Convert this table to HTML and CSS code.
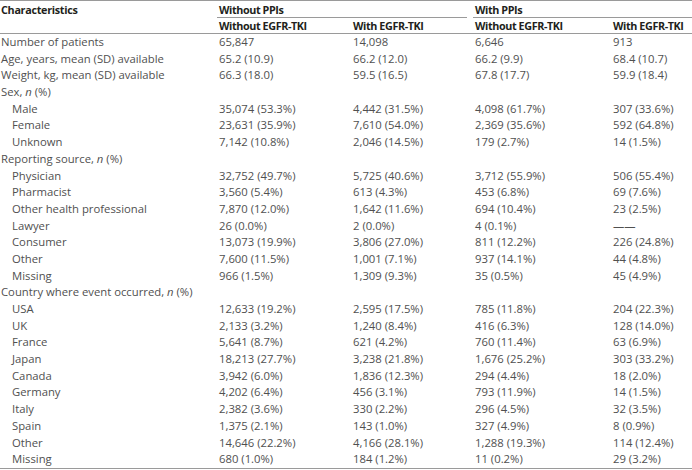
FILE: index.html
```html
<!DOCTYPE html>
<html>
<head>
<meta charset="utf-8">
<link rel="stylesheet" href="styles.css">
</head>
<body>
<table class="data">
  <colgroup>
    <col class="c1"><col class="c2"><col class="c3"><col class="c4"><col class="c5">
  </colgroup>
  <thead>
    <tr class="h1">
      <th rowspan="2" class="char">Characteristics</th>
      <th colspan="2" class="grp grp-a"><div class="grp-label">Without PPIs</div></th>
      <th colspan="2" class="grp grp-b"><div class="grp-label">With PPIs</div></th>
    </tr>
    <tr class="h2">
      <th>Without EGFR-TKI</th>
      <th>With EGFR-TKI</th>
      <th>Without EGFR-TKI</th>
      <th>With EGFR-TKI</th>
    </tr>
  </thead>
  <tbody>
    <tr><td>Number of patients</td><td>65,847</td><td>14,098</td><td>6,646</td><td>913</td></tr>
    <tr><td>Age, years, mean (SD) available</td><td>65.2 (10.9)</td><td>66.2 (12.0)</td><td>66.2 (9.9)</td><td>68.4 (10.7)</td></tr>
    <tr><td>Weight, kg, mean (SD) available</td><td>66.3 (18.0)</td><td>59.5 (16.5)</td><td>67.8 (17.7)</td><td>59.9 (18.4)</td></tr>
    <tr><td>Sex, <i>n</i> (%)</td><td></td><td></td><td></td><td></td></tr>
    <tr><td class="sub">Male</td><td>35,074 (53.3%)</td><td>4,442 (31.5%)</td><td>4,098 (61.7%)</td><td>307 (33.6%)</td></tr>
    <tr><td class="sub">Female</td><td>23,631 (35.9%)</td><td>7,610 (54.0%)</td><td>2,369 (35.6%)</td><td>592 (64.8%)</td></tr>
    <tr><td class="sub">Unknown</td><td>7,142 (10.8%)</td><td>2,046 (14.5%)</td><td>179 (2.7%)</td><td>14 (1.5%)</td></tr>
    <tr><td>Reporting source, <i>n</i> (%)</td><td></td><td></td><td></td><td></td></tr>
    <tr><td class="sub">Physician</td><td>32,752 (49.7%)</td><td>5,725 (40.6%)</td><td>3,712 (55.9%)</td><td>506 (55.4%)</td></tr>
    <tr><td class="sub">Pharmacist</td><td>3,560 (5.4%)</td><td>613 (4.3%)</td><td>453 (6.8%)</td><td>69 (7.6%)</td></tr>
    <tr><td class="sub">Other health professional</td><td>7,870 (12.0%)</td><td>1,642 (11.6%)</td><td>694 (10.4%)</td><td>23 (2.5%)</td></tr>
    <tr><td class="sub">Lawyer</td><td>26 (0.0%)</td><td>2 (0.0%)</td><td>4 (0.1%)</td><td>——</td></tr>
    <tr><td class="sub">Consumer</td><td>13,073 (19.9%)</td><td>3,806 (27.0%)</td><td>811 (12.2%)</td><td>226 (24.8%)</td></tr>
    <tr><td class="sub">Other</td><td>7,600 (11.5%)</td><td>1,001 (7.1%)</td><td>937 (14.1%)</td><td>44 (4.8%)</td></tr>
    <tr><td class="sub">Missing</td><td>966 (1.5%)</td><td>1,309 (9.3%)</td><td>35 (0.5%)</td><td>45 (4.9%)</td></tr>
    <tr><td>Country where event occurred, <i>n</i> (%)</td><td></td><td></td><td></td><td></td></tr>
    <tr><td class="sub">USA</td><td>12,633 (19.2%)</td><td>2,595 (17.5%)</td><td>785 (11.8%)</td><td>204 (22.3%)</td></tr>
    <tr><td class="sub">UK</td><td>2,133 (3.2%)</td><td>1,240 (8.4%)</td><td>416 (6.3%)</td><td>128 (14.0%)</td></tr>
    <tr><td class="sub">France</td><td>5,641 (8.7%)</td><td>621 (4.2%)</td><td>760 (11.4%)</td><td>63 (6.9%)</td></tr>
    <tr><td class="sub">Japan</td><td>18,213 (27.7%)</td><td>3,238 (21.8%)</td><td>1,676 (25.2%)</td><td>303 (33.2%)</td></tr>
    <tr><td class="sub">Canada</td><td>3,942 (6.0%)</td><td>1,836 (12.3%)</td><td>294 (4.4%)</td><td>18 (2.0%)</td></tr>
    <tr><td class="sub">Germany</td><td>4,202 (6.4%)</td><td>456 (3.1%)</td><td>793 (11.9%)</td><td>14 (1.5%)</td></tr>
    <tr><td class="sub">Italy</td><td>2,382 (3.6%)</td><td>330 (2.2%)</td><td>296 (4.5%)</td><td>32 (3.5%)</td></tr>
    <tr><td class="sub">Spain</td><td>1,375 (2.1%)</td><td>143 (1.0%)</td><td>327 (4.9%)</td><td>8 (0.9%)</td></tr>
    <tr><td class="sub">Other</td><td>14,646 (22.2%)</td><td>4,166 (28.1%)</td><td>1,288 (19.3%)</td><td>114 (12.4%)</td></tr>
    <tr><td class="sub">Missing</td><td>680 (1.0%)</td><td>184 (1.2%)</td><td>11 (0.2%)</td><td>29 (3.2%)</td></tr>
  </tbody>
</table>
</body>
</html>
```
FILE: styles.css
```css
html, body {
  margin: 0;
  padding: 0;
  background: #ffffff;
}
.data {
  width: 692px;
  border-collapse: collapse;
  table-layout: fixed;
  font-family: "Open Sans", "Liberation Sans", sans-serif;
  font-size: 11.3px;
  color: #505050;
  border-top: 1px solid #9a9a9a;
  border-bottom: 1px solid #9a9a9a;
}
.c1 { width: 217px; }
.c2 { width: 134px; }
.c3 { width: 122px; }
.c4 { width: 138px; }
.c5 { width: 81px; }
.data th {
  font-size: 10.8px;
  font-weight: 700;
  color: #231f20;
  text-align: left;
  vertical-align: top;
  padding: 0 0 0 2px;
  white-space: nowrap;
  letter-spacing: -0.4px;
}
.data th.char {
  padding-left: 1px;
  line-height: 17px;
  letter-spacing: -0.3px;
  border-bottom: 1px solid #9a9a9a;
}
.data .h1 th { height: 17px; line-height: 17px; }
.data .h2 th { height: 15px; line-height: 15px; border-bottom: 1px solid #9a9a9a; }
.data th.grp { padding: 0; }
.data th.grp-a { padding-right: 6px; }
.grp-label {
  padding-left: 2px;
  height: 16px;
  line-height: 17px;
  border-bottom: 1px solid #9a9a9a;
}
.data td {
  height: 16.69px;
  line-height: 16.69px;
  padding: 0 0 0 2px;
  white-space: nowrap;
  vertical-align: middle;
}
.data td:first-child { padding-left: 1px; }
.data td.sub { padding-left: 12px; }
```
